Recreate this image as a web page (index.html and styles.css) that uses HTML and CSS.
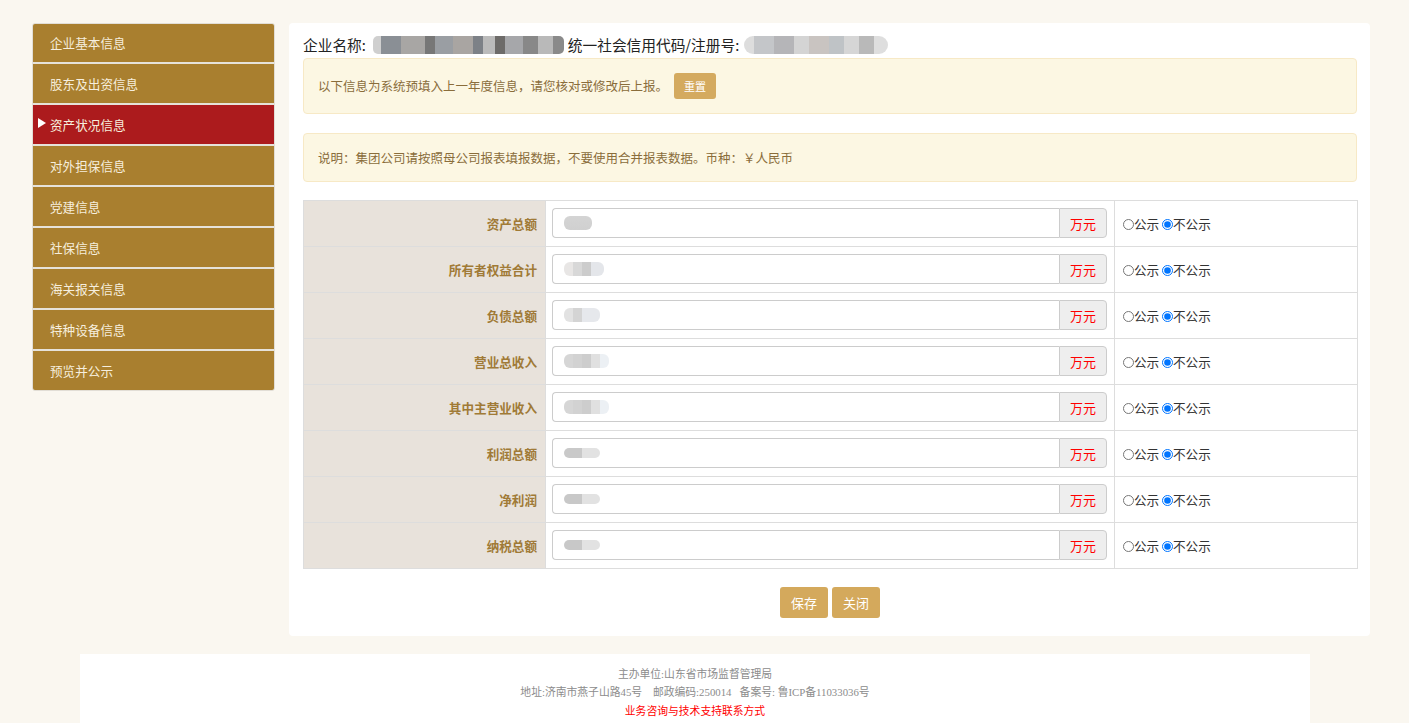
FILE: index.html
```html
<!DOCTYPE html>
<html lang="zh-CN">
<head>
<meta charset="utf-8">
<title>资产状况信息</title>
<link rel="stylesheet" href="styles.css">
</head>
<body>
<div class="page">
  <ul class="sidebar">
    <li class="nav-item">企业基本信息</li>
    <li class="nav-item">股东及出资信息</li>
    <li class="nav-item active">资产状况信息</li>
    <li class="nav-item">对外担保信息</li>
    <li class="nav-item">党建信息</li>
    <li class="nav-item">社保信息</li>
    <li class="nav-item">海关报关信息</li>
    <li class="nav-item">特种设备信息</li>
    <li class="nav-item">预览并公示</li>
  </ul>
  <div class="main">
    <div class="head">
      <span>企业名称:</span>
      <span class="mask mask-name"></span>
      <span>统一社会信用代码/注册号:</span>
      <span class="mask mask-code"></span>
    </div>
    <div class="alert alert-top">以下信息为系统预填入上一年度信息，请您核对或修改后上报。<button class="btn-reset">重置</button></div>
    <div class="alert alert-note">说明：集团公司请按照母公司报表填报数据，不要使用合并报表数据。币种：￥人民币</div>
    <table class="form-table">
      <colgroup><col class="c1"><col class="c2"><col class="c3"></colgroup>
      <tr><th>资产总额</th><td><div class="ig"><div class="ig-input"><span class="blur b1"></span></div><span class="ig-addon">万元</span></div></td><td class="pub"><input type="radio" name="r1">公示 <input type="radio" name="r1" checked>不公示</td></tr>
      <tr><th>所有者权益合计</th><td><div class="ig"><div class="ig-input"><span class="blur b2"></span></div><span class="ig-addon">万元</span></div></td><td class="pub"><input type="radio" name="r2">公示 <input type="radio" name="r2" checked>不公示</td></tr>
      <tr><th>负债总额</th><td><div class="ig"><div class="ig-input"><span class="blur b3"></span></div><span class="ig-addon">万元</span></div></td><td class="pub"><input type="radio" name="r3">公示 <input type="radio" name="r3" checked>不公示</td></tr>
      <tr><th>营业总收入</th><td><div class="ig"><div class="ig-input"><span class="blur b4"></span></div><span class="ig-addon">万元</span></div></td><td class="pub"><input type="radio" name="r4">公示 <input type="radio" name="r4" checked>不公示</td></tr>
      <tr><th>其中主营业收入</th><td><div class="ig"><div class="ig-input"><span class="blur b4"></span></div><span class="ig-addon">万元</span></div></td><td class="pub"><input type="radio" name="r5">公示 <input type="radio" name="r5" checked>不公示</td></tr>
      <tr><th>利润总额</th><td><div class="ig"><div class="ig-input"><span class="blur b5"></span></div><span class="ig-addon">万元</span></div></td><td class="pub"><input type="radio" name="r6">公示 <input type="radio" name="r6" checked>不公示</td></tr>
      <tr><th>净利润</th><td><div class="ig"><div class="ig-input"><span class="blur b6"></span></div><span class="ig-addon">万元</span></div></td><td class="pub"><input type="radio" name="r7">公示 <input type="radio" name="r7" checked>不公示</td></tr>
      <tr><th>纳税总额</th><td><div class="ig"><div class="ig-input"><span class="blur b6"></span></div><span class="ig-addon">万元</span></div></td><td class="pub"><input type="radio" name="r8">公示 <input type="radio" name="r8" checked>不公示</td></tr>
    </table>
    <div class="actions">
      <button class="btn">保存</button>
      <button class="btn">关闭</button>
    </div>
  </div>
</div>
<div class="footer">
  <p>主办单位:山东省市场监督管理局</p>
  <p>地址:济南市燕子山路45号&nbsp;&nbsp;&nbsp;&nbsp;邮政编码:250014&nbsp;&nbsp;&nbsp;备案号: 鲁ICP备11033036号</p>
  <p class="red">业务咨询与技术支持联系方式</p>
</div>
</body>
</html>
```

FILE: styles.css
```css
* { box-sizing: border-box; }
html, body { margin: 0; padding: 0; }
body {
  background: #faf7f0;
  font-family: "Noto Sans CJK SC", "Noto Sans", sans-serif;
  color: #333;
  font-size: 12.6px;
}
.page {
  display: flex;
  align-items: flex-start;
  gap: 14px;
  padding: 23px 0 0 32px;
}
.sidebar {
  list-style: none;
  margin: 0;
  padding: 0;
  width: 243px;
  flex: none;
  display: flex;
  flex-direction: column;
  gap: 2px;
  background: #e6e2da;
  border: 1px solid #e2ded6;
  border-radius: 3px;
  overflow: hidden;
}
.nav-item {
  height: 39px;
  line-height: 39px;
  padding-left: 17px;
  background: #a97f2f;
  color: #f6eedd;
  font-size: 12.6px;
  position: relative;
}
.nav-item:first-child { height: 38px; line-height: 38px; }
.nav-item.active { background: #ac1b1d; }
.nav-item.active::before {
  content: "";
  position: absolute;
  left: 5px;
  top: 13px;
  border-left: 8px solid #fff;
  border-top: 5px solid transparent;
  border-bottom: 5px solid transparent;
}
.main {
  width: 1081px;
  background: #fff;
  border-radius: 4px;
  padding: 10px 13px 18px 14px;
}
.head {
  height: 24px;
  line-height: 24px;
  font-size: 14.7px;
  color: #222;
  display: flex;
  align-items: center;
  margin-bottom: 1px;
}
.mask {
  display: inline-block;
  height: 18px;
  border-radius: 5px;
  filter: blur(0.6px);
}
.mask-name {
  width: 191px;
  margin: 0 4px 0 7px;
  background:
    linear-gradient(90deg, #cfcfcf 0 8px, #8a8f95 8px 28px, #a8a6a4 28px 52px, #777 52px 62px, #9a9ea3 62px 80px, #a9a5a2 80px 100px, #7d8187 100px 110px, #bbb 110px 122px, #6d6b69 122px 132px, #a6a7aa 132px 150px, #888 150px 165px, #b9b9b9 165px 180px, #8a8a8a 180px 191px);
}
.mask-code {
  width: 144px;
  margin-left: 5px;
  background:
    linear-gradient(90deg, #ddd 0 10px, #c4c6c9 10px 30px, #b5b5b8 30px 50px, #d4d4d4 50px 65px, #c9c4c1 65px 85px, #bfc3c6 85px 100px, #d6d6d6 100px 115px, #b9b9b9 115px 130px, #dedede 130px 144px);
  border-radius: 9px;
}
.alert {
  background: #fcf7e3;
  border: 1px solid #f7e9c6;
  border-radius: 4px;
  color: #8a6d3b;
  font-size: 12.5px;
}
.alert-top {
  padding: 14px 14px;
  line-height: 26px;
  display: flex;
  align-items: center;
}
.alert-note {
  margin-top: 19px;
  padding: 15px 14px;
  line-height: 17px;
}
.btn-reset {
  margin-left: 6px;
  height: 26px;
  width: 42px;
  border: none;
  border-radius: 3px;
  background: #d4aa5f;
  color: #fff;
  font-family: inherit;
  font-size: 11px;
  padding: 0;
}
.form-table {
  margin-top: 18px;
  width: 100%;
  border-collapse: collapse;
  table-layout: fixed;
}
.c1 { width: 242px; }
.c2 { width: 569px; }
.c3 { width: 243px; }
.form-table th, .form-table td {
  border: 1px solid #ddd;
  padding: 7px 6px 8px;
  vertical-align: middle;
}
.form-table th {
  background: #e8e2db;
  text-align: right;
  padding-right: 8px;
  color: #a07a36;
  font-weight: bold;
  font-size: 12.6px;
}
.ig {
  display: flex;
  height: 30px;
  margin-right: 1px;
}
.ig-input {
  flex: 1;
  border: 1px solid #ccc;
  border-right: none;
  border-radius: 4px 0 0 4px;
  display: flex;
  align-items: center;
  padding-left: 11px;
}
.ig-addon {
  width: 48px;
  border: 1px solid #ccc;
  border-radius: 0 4px 4px 0;
  background: #eee;
  color: #f00;
  font-size: 13px;
  display: flex;
  align-items: center;
  justify-content: center;
}
.blur {
  display: block;
  height: 14px;
  border-radius: 6px;
  filter: blur(0.7px);
}
.b1 { width: 28px; background: linear-gradient(#d4d4d4, #d0d0d0); }
.b2 { width: 40px; background: linear-gradient(90deg, #e8e6e5 0 9px, #d8d8d8 9px 18px, #ccc 18px 27px, #e4e6ea 27px 40px); }
.b3 { width: 36px; background: linear-gradient(90deg, #e2e2e2 0 9px, #d4d4d4 9px 18px, #e6e8ec 18px 36px); }
.b4 { width: 45px; background: linear-gradient(90deg, #d6d6d6 0 9px, #d2d2d2 9px 18px, #cdcdcd 18px 27px, #e0e0e0 27px 36px, #ecf0f4 36px 45px); }
.b5 { width: 36px; height: 10px; background: linear-gradient(90deg, #c9c9c9 0 18px, #e2e2e2 18px 36px); }
.b6 { width: 36px; height: 10px; background: linear-gradient(90deg, #c8c8c8 0 18px, #e2e2e2 18px 36px); }
.form-table td.pub {
  padding-left: 8px;
  font-size: 12.6px;
  color: #333;
  white-space: nowrap;
}
.pub input {
  margin: 0;
  width: 11px;
  height: 11px;
  vertical-align: -1px;
}
.actions {
  margin-top: 18px;
  display: flex;
  justify-content: center;
  gap: 4px;
}
.btn {
  height: 31px;
  width: 48px;
  border: none;
  border-radius: 3px;
  background: #d4a95c;
  color: #fff;
  font-family: inherit;
  font-size: 13px;
  padding: 0;
}
.footer {
  margin: 18px 0 0 80px;
  width: 1230px;
  background: #fff;
  padding: 11px 0 12px;
  text-align: center;
  font-size: 10.8px;
  color: #8c8c8c;
  font-family: "Liberation Serif", "Noto Sans CJK SC", serif;
}
.footer p { margin: 0; line-height: 18px; }
.footer .red { color: #f00; font-family: "Noto Sans CJK SC", sans-serif; }
```
